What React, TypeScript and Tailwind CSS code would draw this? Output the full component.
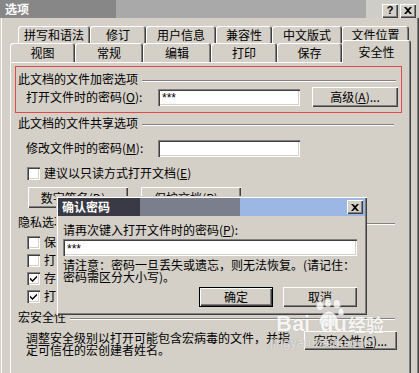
import React from "react";

const raised = "shadow-[inset_1px_1px_0_#ffffff,inset_-1px_-1px_0_#404040,inset_-2px_-2px_0_#808080]";
const sunken = "shadow-[inset_1px_1px_0_#808080,inset_2px_2px_0_#404040,inset_-1px_-1px_0_#ffffff,inset_-2px_-2px_0_#d4d0c8]";

function Btn({ className = "", def = false, children }: { className?: string; def?: boolean; children: React.ReactNode }) {
  return (
    <div className={`flex items-center justify-center bg-[#d4d0c8] ${def ? "border border-black" : ""} ${raised} ${className}`}>
      {children}
    </div>
  );
}

function Field({ className = "", value = "" }: { className?: string; value?: string }) {
  return (
    <div className={`flex items-center bg-white pl-[4px] pt-[2px] font-['Liberation_Sans',sans-serif] text-[12px] ${sunken} ${className}`}>
      {value}
    </div>
  );
}

function Check({ on = false }: { on?: boolean }) {
  return (
    <div className={`w-[13px] h-[13px] shrink-0 bg-white flex items-center justify-center ${sunken}`}>
      {on && (
        <svg width="7" height="7" viewBox="0 0 7 7">
          <polygon points="0,2.5 2.5,5 7,0.5 7,2.5 2.5,7 0,4.5" fill="#000" />
        </svg>
      )}
    </div>
  );
}

function Group({ label, className = "" }: { label: string; className?: string }) {
  return (
    <div className={`flex items-center h-[14px] ${className}`}>
      <span className="whitespace-nowrap">{label}</span>
      <div className="flex-1 ml-[4px] mt-[3px] h-[2px] border-t border-[#808080] border-b border-b-white" />
    </div>
  );
}

function Tab({ label, className = "" }: { label: string; className?: string }) {
  return (
    <div className={`flex items-center justify-center rounded-t-[3px] bg-[#d4d0c8] shadow-[inset_1px_1px_0_#ffffff,inset_-1px_0_0_#404040,inset_-2px_0_0_#808080] ${className}`}>
      {label}
    </div>
  );
}

function Acc({ k }: { k: string }) {
  return (
    <span>
      (<u>{k}</u>)
    </span>
  );
}

function CapBtn({ children }: { children: React.ReactNode }) {
  return (
    <div className={`w-[16px] h-[14px] flex items-center justify-center bg-[#d4d0c8] ${raised}`}>{children}</div>
  );
}

const XGlyph = () => (
  <svg width="8" height="7" viewBox="0 0 8 7">
    <path d="M0 0h2l2 2 2-2h2L5 3.5 8 7H6L4 5 2 7H0l3-3.5z" fill="#000" />
  </svg>
);

export default function App() {
  return (
    <div className="relative w-[419px] h-[373px] overflow-hidden bg-[#d4d0c8] text-black text-[12px] leading-[12px] font-['Noto_Sans_CJK_SC','Liberation_Sans',sans-serif] flex flex-col shadow-[inset_1px_0_0_#d4d0c8,inset_2px_0_0_#ffffff,inset_-1px_0_0_#404040,inset_-2px_0_0_#808080]">
      {/* title bar */}
      <div className="h-[18px] flex items-center bg-[linear-gradient(to_right,#878787_0,#878787_116px,#a9a9a9_116px,#a9a9a9_366px,#cfcdc8_366px)]">
        <span className="ml-[5px] text-white font-bold">选项</span>
        <div className="ml-auto mr-[3px] flex gap-[2px] mt-[3px]">
          <CapBtn>
            <span className="font-['Liberation_Sans',sans-serif] font-bold text-[11px] leading-[11px]">?</span>
          </CapBtn>
          <CapBtn>
            <XGlyph />
          </CapBtn>
        </div>
      </div>

      {/* tabs */}
      <div className="mt-[8px] ml-[18px] h-[17px] flex">
        <Tab label="拼写和语法" className="w-[72px] h-[17px]" />
        <Tab label="修订" className="w-[56px] h-[17px]" />
        <Tab label="用户信息" className="w-[70px] h-[17px]" />
        <Tab label="兼容性" className="w-[56px] h-[17px]" />
        <Tab label="中文版式" className="w-[70px] h-[17px]" />
        <Tab label="文件位置" className="w-[67px] h-[17px]" />
      </div>
      <div className="ml-[10px] h-[19px] flex items-end">
        <Tab label="视图" className="w-[65px] h-[19px]" />
        <Tab label="常规" className="w-[68px] h-[19px]" />
        <Tab label="编辑" className="w-[68px] h-[19px]" />
        <Tab label="打印" className="w-[66px] h-[19px]" />
        <Tab label="保存" className="w-[65px] h-[19px]" />
        <Tab label="安全性" className="relative z-10 w-[69px] h-[23px] mb-[-1px] pt-[1px]" />
      </div>

      {/* panel */}
      <div className="ml-[10px] w-[401px] flex-1 border-l border-t border-white border-r border-r-[#404040] shadow-[inset_-1px_0_0_#808080] flex flex-col">
        {/* encryption */}
        <div className="mt-[3px] ml-[4px] w-[387px] h-[47px] border border-[#e04a4a] pl-[2px] pt-[5px] flex flex-col">
          <Group label="此文档的文件加密选项" className="w-[378px]" />
          <div className="mt-[1px] h-[20px] flex items-center">
            <div className="w-[140px] pl-[8px] whitespace-nowrap">
              打开文件时的密码<Acc k="O" />:
            </div>
            <Field className="w-[142px] h-[17px]" value="***" />
            <Btn className="ml-[12px] w-[86px] h-[20px]">
              高级<Acc k="A" />...
            </Btn>
          </div>
        </div>

        <div className="ml-[7px] flex flex-col">
          {/* sharing */}
          <Group label="此文档的文件共享选项" className="mt-[3px] w-[376px]" />
          <div className="mt-[8px] h-[20px] flex items-center">
            <div className="w-[140px] pl-[8px] whitespace-nowrap">
              修改文件时的密码<Acc k="M" />:
            </div>
            <Field className="w-[142px] h-[17px]" />
          </div>
          <div className="mt-[8px] h-[14px] flex items-center pl-[9px]">
            <Check />
            <span className="ml-[4px]">
              建议以只读方式打开文档<Acc k="E" />
            </span>
          </div>
          <div className="mt-[7px] h-[21px] flex pl-[10px]">
            <Btn className="w-[100px] h-[21px]">
              数字签名<Acc k="D" />...
            </Btn>
            <Btn className="ml-[13px] w-[100px] h-[21px]">
              保护文档<Acc k="P" />...
            </Btn>
          </div>

          {/* privacy */}
          <Group label="隐私选项" className="mt-[7px] w-[377px]" />
          <div className="mt-[4px] flex flex-col pl-[9px]">
            {[
              { t: "保存时从文件属性中删除个人信息", on: false },
              { t: "打印、保存或发送包含修订的文件之前给出警告", on: false },
              { t: "存储用于增强合并精确性的随机编号", on: true },
              { t: "打开或保存时标记可见", on: true },
            ].map((r, i) => (
              <div key={i} className="h-[18px] flex items-center">
                <Check on={r.on} />
                <span className="ml-[4px] whitespace-nowrap">{r.t}</span>
              </div>
            ))}
          </div>

          {/* macro */}
          <Group label="宏安全性" className="mt-[5px] w-[377px]" />
          <div className="mt-[8px] flex items-start">
            <div className="ml-[8px] w-[270px] leading-[12px]">
              调整安全级别以打开可能包含宏病毒的文件，并指
              <br />
              定可信任的宏创建者姓名。
            </div>
            <Btn className="ml-[8px] -mt-[1px] w-[93px] h-[19px]">
              宏安全性<Acc k="S" />...
            </Btn>
          </div>
        </div>
      </div>

      {/* confirm password dialog */}
      <div className={`absolute left-[56px] top-[196px] w-[311px] h-[119px] bg-[#d4d0c8] p-[2px] flex flex-col shadow-[inset_1px_1px_0_#d4d0c8,inset_2px_2px_0_#ffffff,inset_-1px_-1px_0_#404040,inset_-2px_-2px_0_#808080]`}>
        <div className="h-[18px] flex items-center bg-[linear-gradient(to_right,#3a3a46_0,#3a3a46_82px,#7b7e8c_82px,#7b7e8c_182px,#9cb7e3_182px)]">
          <span className="ml-[4px] text-white font-bold">确认密码</span>
          <div className="ml-auto mr-[2px]">
            <CapBtn>
              <XGlyph />
            </CapBtn>
          </div>
        </div>
        <div className="pl-[5px] flex flex-col">
          <div className="mt-[8px] h-[12px] whitespace-nowrap">
            请再次键入打开文件时的密码<Acc k="P" />:
          </div>
          <Field className="mt-[3px] w-[294px] h-[17px]" value="***" />
          <div className="mt-[3px] whitespace-nowrap">
            请注意：密码一旦丢失或遗忘，则无法恢复。(请记住：
            <br />
            密码需区分大小写)。
          </div>
          <div className="mt-[4px] w-[294px] flex justify-end gap-[10px]">
            <Btn def className="w-[74px] h-[20px]">
              确定
            </Btn>
            <Btn className="w-[74px] h-[20px]">取消</Btn>
          </div>
        </div>
      </div>

      {/* watermark */}
      <div className="pointer-events-none absolute left-[268px] top-[296px] w-[130px] h-[60px] opacity-80">
        <svg className="absolute left-[44px] top-[2px]" width="34" height="30" viewBox="0 0 34 30">
          <g fill="#ffffff" stroke="#b8b8b8" strokeWidth="0.6">
            <ellipse cx="8" cy="8" rx="3.5" ry="4.5" />
            <ellipse cx="16" cy="4.5" rx="3.5" ry="4.5" />
            <ellipse cx="25" cy="6" rx="3.5" ry="4.5" />
            <ellipse cx="29" cy="14" rx="3" ry="4" />
            <path d="M17 13c5 0 9 7 9 11s-4 5-9 5-10-1-10-5 5-11 10-11z" />
          </g>
        </svg>
        <span className="absolute left-[8px] top-[17px] text-[22px] leading-[22px] font-bold text-white font-['Liberation_Sans',sans-serif] [text-shadow:0_0_1px_#9a9a9a]">
          Bai
        </span>
        <span className="absolute left-[52px] top-[17px] text-[22px] leading-[22px] font-bold text-white font-['Liberation_Sans',sans-serif] [text-shadow:0_0_1px_#9a9a9a]">
          du
        </span>
        <span className="absolute left-[80px] top-[19px] text-[18px] leading-[18px] font-bold text-white [text-shadow:0_0_1px_#9a9a9a]">
          经验
        </span>
        <span className="absolute left-[2px] top-[40px] text-[13px] leading-[13px] text-[#e8e8e8] font-['Liberation_Sans',sans-serif] [text-shadow:0_0_1px_#8a8a8a]">
          jingyan.baidu.com
        </span>
      </div>
    </div>
  );
}
